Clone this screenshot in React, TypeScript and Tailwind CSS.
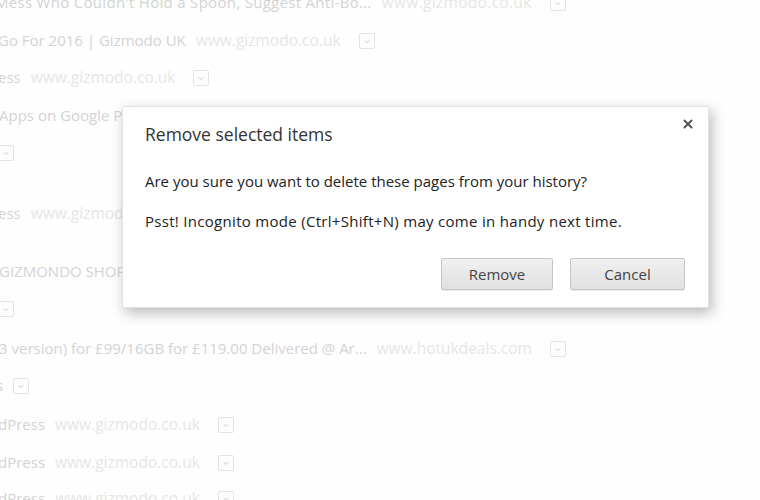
import { X } from 'lucide-react'

type Row = { title: string; url?: string; gap: string; shift: string }

const rows: Row[] = [
  { title: "Mess Who Couldn't Hold a Spoon, Suggest Anti-Bo...", url: 'www.gizmodo.co.uk', gap: 'mt-[-9px]', shift: 'ml-[-5px] tracking-[0.3px]' },
  { title: 'Go For 2016 | Gizmodo UK', url: 'www.gizmodo.co.uk', gap: 'mt-[15px]', shift: 'ml-[-2px]' },
  { title: 'ess', url: 'www.gizmodo.co.uk', gap: 'mt-[14px]', shift: 'ml-[-2px]' },
  { title: 'Apps on Google Play', url: 'play.google.com', gap: 'mt-[15px]', shift: 'ml-[-1px]' },
  { title: '', gap: 'mt-[14px]', shift: 'ml-[-2px]' },
  { title: 'ess', url: 'www.gizmodo.co.uk', gap: 'mt-[38px]', shift: 'ml-[-2px]' },
  { title: 'GIZMONDO SHOP', url: 'www.gizmondo.co.uk', gap: 'mt-[35px]', shift: 'ml-[-1px]' },
  { title: '', gap: 'mt-[14px]', shift: 'ml-[-2px]' },
  { title: '3 version) for £99/16GB for £119.00 Delivered @ Ar...', url: 'www.hotukdeals.com', gap: 'mt-[17px]', shift: 'ml-[-1px]' },
  { title: 's', gap: 'mt-[14px]', shift: 'ml-[-4px]' },
  { title: 'dPress', url: 'www.gizmodo.co.uk', gap: 'mt-[16px]', shift: 'ml-[-2px]' },
  { title: 'dPress', url: 'www.gizmodo.co.uk', gap: 'mt-[15px]', shift: 'ml-[-2px]' },
  { title: 'dPress', url: 'www.gizmodo.co.uk', gap: 'mt-[13px]', shift: 'ml-[-2px]' },
]

function MenuBox() {
  return (
    <span className="inline-flex items-center justify-center w-[16px] h-[16px] border border-[#e4e4e4] rounded-[2px] shrink-0">
      <svg width="8" height="8" viewBox="0 0 8 8" aria-hidden="true">
        <path d="M1.5 3 L4 5.5 L6.5 3" fill="none" stroke="#e2e2e2" strokeWidth="1.4" />
      </svg>
    </span>
  )
}

function HistoryRow({ title, url, gap, shift }: Row) {
  return (
    <div className={`flex items-center h-[23px] whitespace-nowrap ${gap} ${shift}`}>
      {title && <span className="text-[15px] text-[#d3d3d3] mr-[10px]">{title}</span>}
      {url && <span className="text-[15.5px] text-[#e6e6e6] mr-[18px]">{url}</span>}
      <MenuBox />
    </div>
  )
}

export default function App() {
  return (
    <div
      className="relative w-[760px] h-[500px] overflow-hidden bg-[#fefefe]"
      style={{ fontFamily: '"Open Sans", "Noto Sans", "DejaVu Sans", sans-serif' }}
    >
      {/* faded history list behind the overlay */}
      <div className="flex flex-col">
        {rows.map((r, i) => (
          <HistoryRow key={i} {...r} />
        ))}
      </div>

      {/* dialog */}
      <div className="absolute left-[122px] top-[106px] w-[587px] h-[202px] bg-white rounded-[2px] border border-[#e2e2e2] shadow-[3px_5px_14px_rgba(0,0,0,0.28)] px-[22px] pt-[15px]">
        <div className="flex items-start justify-between">
          <h2 className="text-[17.5px] text-[#333] leading-[24px]">Remove selected items</h2>
          <button className="mt-[-5px] mr-[-9px] text-[#555]" aria-label="Close">
            <X size={14} strokeWidth={3.4} />
          </button>
        </div>
        <p className="mt-[25px] text-[15px] text-[#222] leading-[20px]">
          Are you sure you want to delete these pages from your history?
        </p>
        <p className="mt-[20px] text-[15px] tracking-[0.3px] text-[#222] leading-[20px]">
          Psst! Incognito mode (Ctrl+Shift+N) may come in handy next time.
        </p>
        <div className="flex justify-end gap-[17px] mt-[27px] mr-[1px]">
          <button className="w-[112px] h-[32px] rounded-[2px] border border-[#c6c6c6] bg-gradient-to-b from-[#f0f0f0] to-[#e0e0e0] text-[15px] text-[#444] shadow-[0_1px_0_rgba(0,0,0,0.08)]">
            Remove
          </button>
          <button className="w-[115px] h-[32px] rounded-[2px] border border-[#c6c6c6] bg-gradient-to-b from-[#f0f0f0] to-[#e0e0e0] text-[15px] text-[#444] shadow-[0_1px_0_rgba(0,0,0,0.08)]">
            Cancel
          </button>
        </div>
      </div>
    </div>
  )
}
